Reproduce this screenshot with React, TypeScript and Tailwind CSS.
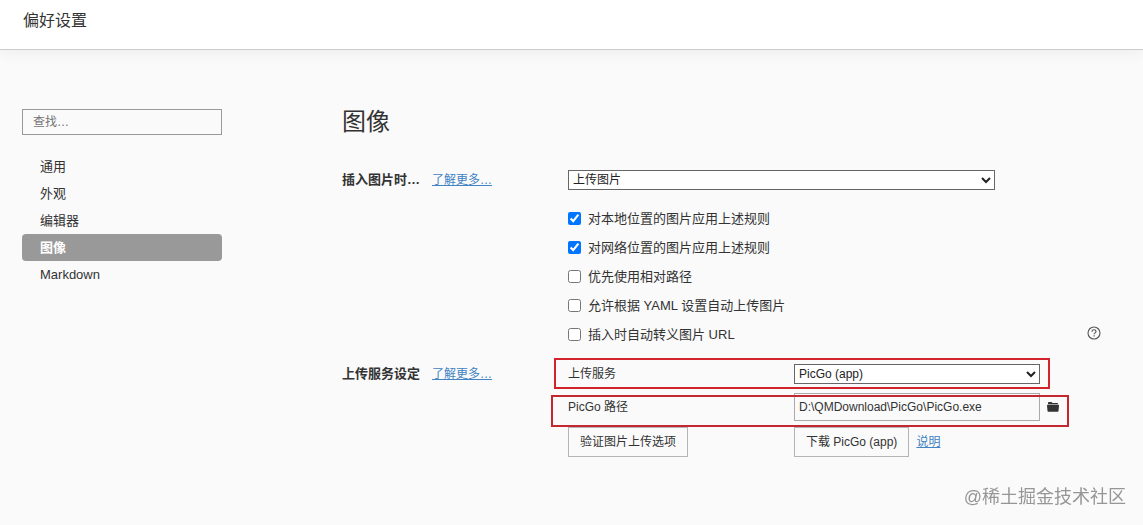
import React, { useState } from 'react';

const sections = ['通用', '外观', '编辑器', '图像', 'Markdown'];

const rules = [
  { id: 'local', label: '对本地位置的图片应用上述规则', checked: true },
  { id: 'network', label: '对网络位置的图片应用上述规则', checked: true },
  { id: 'relative', label: '优先使用相对路径', checked: false },
  { id: 'yaml', label: '允许根据 YAML 设置自动上传图片', checked: false },
  { id: 'escape', label: '插入时自动转义图片 URL', checked: false },
];

const HelpIcon = () => (
  <svg width="14" height="14" viewBox="0 0 14 14" fill="none" stroke="currentColor" aria-hidden="true">
    <circle cx="7" cy="7" r="6" strokeWidth="1.1" />
    <path d="M5 5.7C5 4.4 5.8 3.7 7 3.7s2 .7 2 1.8c0 1.3-1.9 1.4-1.9 2.8" strokeWidth="1.1" />
    <path d="M7.1 9.3v1.2" strokeWidth="1.2" />
  </svg>
);

const FolderIcon = () => (
  <svg width="12" height="10" viewBox="0 0 12 10" fill="currentColor" aria-hidden="true">
    <path d="M1 1C1 .4 1.3 0 1.9 0h2.4c.5 0 .8.2.9.6l.1.4h5c.5 0 .8.3.8.8v.4H1z" />
    <path d="M.6 2.8h10.8c.4 0 .6.2.6.6l-.5 5.6c0 .5-.3.8-.8.8H1.3c-.5 0-.8-.3-.8-.8L0 3.4c0-.4.2-.6.6-.6z" />
  </svg>
);

const MoreLink = ({ children }: { children: React.ReactNode }) => (
  <a href="#" className="text-xs leading-5 text-[#4183c4] underline">
    {children}
  </a>
);

const Sidebar = () => {
  const [active, setActive] = useState('图像');

  return (
    <aside className="w-[200px] shrink-0">
      <input
        type="search"
        aria-label="查找"
        placeholder="查找…"
        className="block h-[26px] w-full border border-[#999] bg-transparent px-[10px] text-xs placeholder:text-[#757575]"
      />
      <nav className="mt-[18px] flex flex-col">
        {sections.map((name) => (
          <button
            key={name}
            onClick={() => setActive(name)}
            className={`h-[27px] rounded px-[18px] text-left ${
              active === name ? 'bg-[#999] font-bold text-white' : ''
            }`}
          >
            {name}
          </button>
        ))}
      </nav>
    </aside>
  );
};

const App = () => {
  const [checked, setChecked] = useState(rules.filter((r) => r.checked).map((r) => r.id));

  const toggle = (id: string) => {
    setChecked(checked.includes(id) ? checked.filter((c) => c !== id) : [...checked, id]);
  };

  return (
    <div className="min-h-screen bg-[#fafafa] font-['Liberation_Sans','Noto_Sans_CJK_SC',sans-serif] text-[13px] leading-5 text-[#333]">
      <header className="border-b border-[#ccc] bg-white px-[23px] pt-[9px] pb-4 shadow-[0_4px_14px_rgba(0,0,0,0.05)]">
        <h1 className="text-base">偏好设置</h1>
      </header>

      <div className="flex gap-[120px] pt-[59px] pr-[42px] pl-[22px]">
        <Sidebar />

        <main className="min-w-0 flex-1">
          <h2 className="-mt-[3px] text-2xl leading-8">图像</h2>

          {/* Insert rules */}
          <section className="mt-8 flex">
            <div className="flex w-[226px] shrink-0 items-baseline gap-3 self-start">
              <h3 className="font-bold">插入图片时…</h3>
              <MoreLink>了解更多…</MoreLink>
            </div>
            <div className="min-w-0 flex-1">
              <select
                aria-label="插入图片时"
                className="block h-5 w-[427px] max-w-full border border-[#666] bg-white text-xs text-[#222]"
              >
                <option>上传图片</option>
              </select>
              <div className="mt-[14px]">
                {rules.map((rule) => (
                  <div key={rule.id} className="flex h-[29px] items-center justify-between">
                    <label className="flex items-center gap-[7px]">
                      <input
                        type="checkbox"
                        className="size-[13px]"
                        checked={checked.includes(rule.id)}
                        onChange={() => toggle(rule.id)}
                      />
                      {rule.label}
                    </label>
                    {rule.id === 'escape' && (
                      <button aria-label="帮助" className="pb-[3px] text-[#555]">
                        <HelpIcon />
                      </button>
                    )}
                  </div>
                ))}
              </div>
            </div>
          </section>

          {/* Upload service */}
          <section className="mt-[15px] flex">
            <div className="flex w-[226px] shrink-0 items-baseline gap-3 self-start">
              <h3 className="font-bold">上传服务设定</h3>
              <MoreLink>了解更多…</MoreLink>
            </div>
            <div className="min-w-0 flex-1 text-xs leading-5">
              <div className="relative flex w-[472px] max-w-full items-center">
                <label htmlFor="service" className="w-[226px] shrink-0">
                  上传服务
                </label>
                <select
                  id="service"
                  className="h-5 min-w-0 flex-1 border border-[#666] bg-white text-xs text-[#222]"
                >
                  <option>PicGo (app)</option>
                </select>
                <div className="pointer-events-none absolute -top-[6px] -right-[10px] -bottom-[5px] -left-[14px] border-2 border-[#d3232b]" />
              </div>

              <div className="relative mt-[9px] flex w-[491px] max-w-full items-center gap-[7px]">
                <label htmlFor="path" className="w-[219px] shrink-0">
                  PicGo 路径
                </label>
                <input
                  id="path"
                  type="text"
                  defaultValue="D:\QMDownload\PicGo\PicGo.exe"
                  className="h-7 min-w-0 flex-1 border border-[#aaa] bg-transparent px-1"
                />
                <button aria-label="选择路径">
                  <FolderIcon />
                </button>
                <div className="pointer-events-none absolute top-[2px] -right-[10px] -bottom-[6px] -left-[17px] border-2 border-[#c3272f]" />
              </div>

              <div className="mt-[6px] flex items-center">
                <div className="w-[226px] shrink-0">
                  <button className="h-[30px] border border-[#b4b4b4] px-[11px]">验证图片上传选项</button>
                </div>
                <button className="mr-[7px] h-[30px] border border-[#b4b4b4] px-[11px]">下载 PicGo (app)</button>
                <MoreLink>说明</MoreLink>
              </div>
            </div>
          </section>
        </main>
      </div>

      <p className="fixed right-[17px] bottom-4 text-lg leading-6 text-[#969696]">@稀土掘金技术社区</p>
    </div>
  );
};

export default App;
